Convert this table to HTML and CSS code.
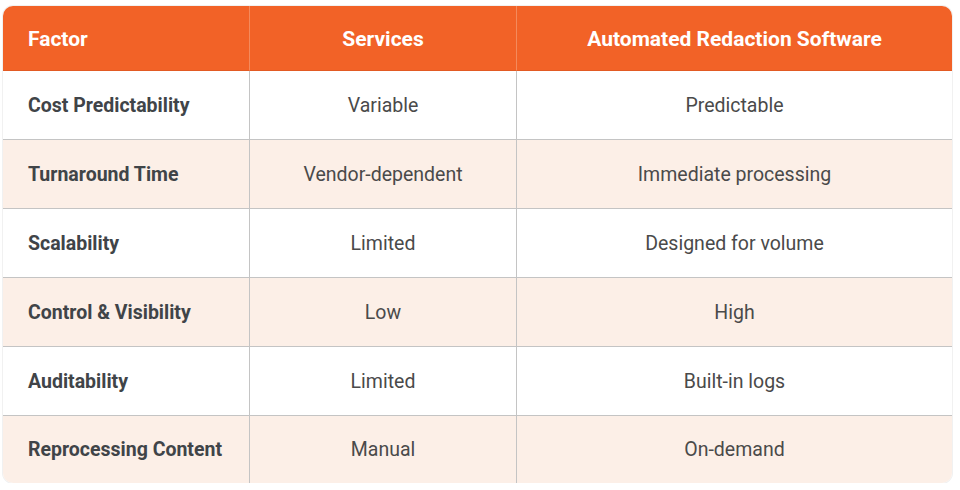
FILE: index.html
```html
<!DOCTYPE html>
<html>
<head>
<meta charset="utf-8">
<link rel="stylesheet" href="styles.css">
</head>
<body>
<div class="wrap">
<table class="cmp">
  <thead>
    <tr><th class="c1">Factor</th><th class="c2">Services</th><th class="c3">Automated Redaction Software</th></tr>
  </thead>
  <tbody>
    <tr><td class="c1">Cost Predictability</td><td class="c2">Variable</td><td class="c3">Predictable</td></tr>
    <tr class="alt"><td class="c1">Turnaround Time</td><td class="c2">Vendor-dependent</td><td class="c3">Immediate processing</td></tr>
    <tr><td class="c1">Scalability</td><td class="c2">Limited</td><td class="c3">Designed for volume</td></tr>
    <tr class="alt"><td class="c1">Control &amp; Visibility</td><td class="c2">Low</td><td class="c3">High</td></tr>
    <tr><td class="c1">Auditability</td><td class="c2">Limited</td><td class="c3">Built-in logs</td></tr>
    <tr class="alt"><td class="c1">Reprocessing Content</td><td class="c2">Manual</td><td class="c3">On-demand</td></tr>
  </tbody>
</table>
</div>
</body>
</html>
```
FILE: styles.css
```css
html, body { margin: 0; padding: 0; background: #fff; }
.wrap { padding: 6px 8px 0 3px; }
.cmp {
  width: 949px;
  border-collapse: separate;
  border-spacing: 0;
  border-radius: 10px;
  overflow: hidden;
  font-family: Roboto, "Liberation Sans", sans-serif;
  table-layout: fixed;
  box-shadow: 0 0 0 1px #f1f1f1;
}
.cmp th, .cmp td { padding: 0; box-sizing: border-box; }
.cmp .c1 { width: 246px; text-align: left; padding-left: 25px; }
.cmp .c2 { width: 267px; text-align: center; }
.cmp .c3 { text-align: center; }
.cmp th {
  height: 65px;
  padding-top: 2px;
  background: #f26227;
  color: #fff;
  font-weight: 700;
  font-size: 21px;
  border-bottom: 1px solid #e25a23;
}
.cmp th + th { border-left: 1px solid #f48a5c; }
.cmp td {
  height: 69px;
  font-size: 19.5px;
  color: #4a4a4a;
  border-bottom: 1px solid #c4c4c4;
}
.cmp td + td { border-left: 1px solid #c4c4c4; }
.cmp tbody tr:last-child td { border-bottom: none; height: 67px; }
.cmp td.c1 { font-weight: 700; color: #404448; }
.cmp tr.alt td { background: #fcefe7; }
```
